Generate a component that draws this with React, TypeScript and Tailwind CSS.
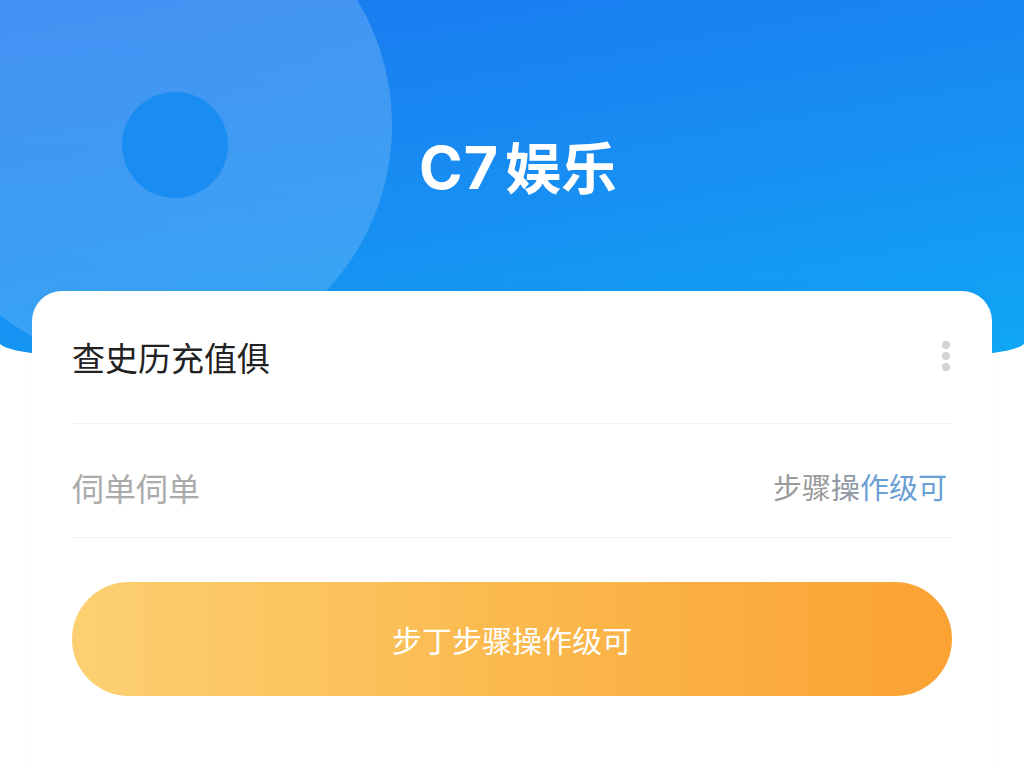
import React from "react";

export default function App() {
  const font = { fontFamily: '"Noto Sans CJK SC", "Noto Sans", sans-serif' };
  return (
    <div className="relative w-full h-[768px] overflow-hidden bg-white" style={font}>
      <div className="relative h-[372px] overflow-hidden rounded-b-[50%_29px] bg-[linear-gradient(170deg,#1a78f0_0%,#1790f2_55%,#0fa9f6_100%)]">
        <div className="absolute left-[-92px] top-[-117px] w-[484px] h-[484px] rounded-full bg-[linear-gradient(180deg,rgba(255,255,255,0.2),rgba(255,255,255,0.14))]" />
        <div className="absolute left-[122px] top-[92px] w-[106px] h-[106px] rounded-full bg-[#1a8df2]" />
        <div className="relative flex justify-center pt-[133px] pl-[12px]">
          <h1 className="text-white font-bold text-[56px] leading-[64px] flex items-baseline">
            <span className="mr-[6px] text-[59px] tracking-[1px]" style={{ fontFamily: 'Inter, "Noto Sans", sans-serif' }}>C7</span>
            <span>娱乐</span>
          </h1>
        </div>
      </div>

      <div className="relative -mt-[81px] mx-8 rounded-t-[30px] bg-white h-[600px] px-[40px] shadow-[0_-2px_12px_rgba(0,0,0,0.025)]">
        <div className="h-[132px] flex items-center justify-between">
          <span className="text-[33px] leading-none text-[#222]">查史历充值俱</span>
          <div className="flex flex-col gap-[3px] pr-[2px] -mt-[2px]">
            <span className="block w-[8px] h-[8px] rounded-full bg-[#d3d3d3]" />
            <span className="block w-[8px] h-[8px] rounded-full bg-[#d3d3d3]" />
            <span className="block w-[8px] h-[8px] rounded-full bg-[#d3d3d3]" />
          </div>
        </div>
        <div className="h-px bg-[#f2f2f2]" />
        <div className="h-[113px] flex items-center justify-between pt-[12px]">
          <span className="text-[32px] leading-none text-[#ababab]">伺单伺单</span>
          <span className="text-[29px] leading-none pr-[5px]">
            <span className="text-[#9a9a9a]">步骤</span>
            <span className="text-[#8f98a4]">操</span>
            <span className="text-[#6a9fd6]">作级可</span>
          </span>
        </div>
        <div className="h-px bg-[#f2f2f2]" />
        <div className="pt-[44px]">
          <button className="w-full h-[114px] rounded-full bg-[linear-gradient(90deg,#fcd072_0%,#fbb94e_50%,#fba233_100%)] flex items-center justify-center text-white text-[30px] leading-none">
            步丁步骤操作级可
          </button>
        </div>
      </div>
    </div>
  );
}
